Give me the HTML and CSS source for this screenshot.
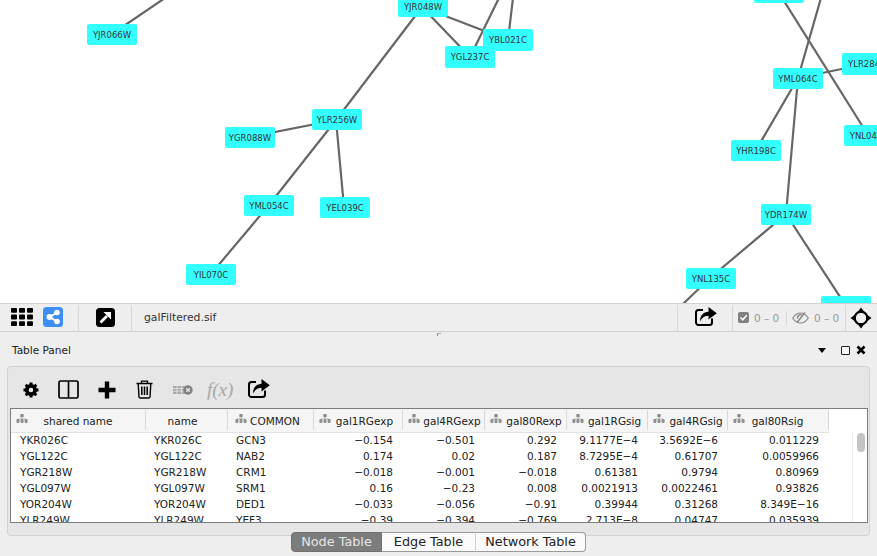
FILE: index.html
```html
<!DOCTYPE html>
<html lang="en">
<head>
<meta charset="utf-8">
<title>Table Panel</title>
<link rel="stylesheet" href="styles.css">
</head>
<body>
<svg width="0" height="0" class="defs">
  <defs>
    <symbol id="tree" viewBox="0 0 12 9">
      <rect x="4.300" y="0" width="3.400" height="3.200" rx="1" fill="#8a8a8a"/>
      <path d="M6 3V5M2 5H10" stroke="#b5b5b5" stroke-width="1" fill="none"/>
      <rect x="0.400" y="5" width="3" height="4" rx="1" fill="#8f8f8f"/>
      <rect x="4.500" y="5" width="3" height="4" rx="1" fill="#8f8f8f"/>
      <rect x="8.600" y="5" width="3" height="4" rx="1" fill="#8f8f8f"/>
    </symbol>
    <symbol id="export" viewBox="0 0 22 20">
      <path d="M8 4H3.500A2.500 2.500 0 0 0 1 6.500V16.500A2.500 2.500 0 0 0 3.500 19H14.500A2.500 2.500 0 0 0 17 16.500V12.500" fill="none" stroke="#000" stroke-width="2"/>
      <path d="M5 15.500C5 9.500 8.500 6 13.500 5.800V1L21.800 7.300L13.500 13.500V9.800C10 9.800 7 11.500 5 15.500Z" fill="#000"/>
    </symbol>
  </defs>
</svg>

<main class="app">
  <section class="canvas">
    <svg class="edges" width="877" height="303" viewBox="0 0 877 303">
      <g stroke="#666" stroke-width="2.200" fill="none" stroke-linecap="round">
        <path d="M112 34L165 -2"/>
        <path d="M422 7L336 120"/>
        <path d="M422 7L470 57"/>
        <path d="M422 7L508 40"/>
        <path d="M499 -2L470 57"/>
        <path d="M513 -2L508 40"/>
        <path d="M336 120L250 137"/>
        <path d="M336 120L269 205"/>
        <path d="M336 120L344 207"/>
        <path d="M269 205L211 274"/>
        <path d="M779 -7L868 135"/>
        <path d="M821 -2L798 78"/>
        <path d="M798 78L866 64"/>
        <path d="M798 78L756 150"/>
        <path d="M798 78L786 214"/>
        <path d="M786 214L710 278"/>
        <path d="M786 214L846 306"/>
        <path d="M710 278L684 303"/>
      </g>
    </svg>
    <span class="node n1">YJR066W</span>
    <span class="node n2">YJR048W</span>
    <span class="node n3">YBL021C</span>
    <span class="node n4">YGL237C</span>
    <span class="node n5">YLR256W</span>
    <span class="node n6">YGR088W</span>
    <span class="node n7">YML054C</span>
    <span class="node n8">YEL039C</span>
    <span class="node n9">YIL070C</span>
    <span class="node n10"></span>
    <span class="node n11">YML064C</span>
    <span class="node n12">YLR284C</span>
    <span class="node n13">YNL047C</span>
    <span class="node n14">YHR198C</span>
    <span class="node n15">YDR174W</span>
    <span class="node n16">YNL135C</span>
    <span class="node n17"></span>
  </section>

  <section class="statusbar">
    <svg class="ic-grid" width="22" height="18" viewBox="0 0 22 18">
      <g fill="#000">
        <rect x="0" y="0" width="6" height="4.800" rx="1"/><rect x="8" y="0" width="6" height="4.800" rx="1"/><rect x="16" y="0" width="6" height="4.800" rx="1"/>
        <rect x="0" y="6.600" width="6" height="4.800" rx="1"/><rect x="8" y="6.600" width="6" height="4.800" rx="1"/><rect x="16" y="6.600" width="6" height="4.800" rx="1"/>
        <rect x="0" y="13.200" width="6" height="4.800" rx="1"/><rect x="8" y="13.200" width="6" height="4.800" rx="1"/><rect x="16" y="13.200" width="6" height="4.800" rx="1"/>
      </g>
    </svg>
    <svg class="ic-share" width="20" height="20" viewBox="0 0 20 20">
      <rect width="20" height="20" rx="3.500" fill="#3e8ff5"/>
      <path d="M14 5.500L6.500 10L14 14.500" stroke="#fff" stroke-width="1.800" fill="none"/>
      <circle cx="14" cy="5.500" r="2.800" fill="#fff"/><circle cx="6.500" cy="10" r="3" fill="#fff"/><circle cx="14" cy="14.500" r="2.800" fill="#fff"/>
    </svg>
    <i class="sep sep-a"></i>
    <svg class="ic-open" width="19" height="19" viewBox="0 0 19 19">
      <rect width="19" height="19" rx="3.500" fill="#000"/>
      <path d="M4.500 14.500L11 8" stroke="#fff" stroke-width="2.800" fill="none"/>
      <path d="M7.500 4H15V11.500Z" fill="#fff"/>
    </svg>
    <i class="sep sep-b"></i>
    <span class="netname">galFiltered.sif</span>
    <i class="sep sep-c"></i>
    <svg class="ic-export-net" width="22" height="20"><use href="#export"/></svg>
    <i class="sep sep-d"></i>
    <svg class="ic-check" width="11" height="11" viewBox="0 0 11 11">
      <rect width="11" height="11" rx="2" fill="#808080"/>
      <path d="M2.500 5.500L4.800 7.800L8.700 3.200" stroke="#fff" stroke-width="1.600" fill="none"/>
    </svg>
    <span class="count count-a">0 – 0</span>
    <i class="sep sep-e"></i>
    <svg class="ic-eye" width="17" height="12" viewBox="0 0 17 12">
      <path d="M0.700 6C3 2.500 5.500 1 8.500 1S14 2.500 16.300 6C14 9.500 11.500 11 8.500 11S3 9.500 0.700 6Z" fill="none" stroke="#8a8a8a" stroke-width="1.200"/>
      <path d="M5 10.500L13 0.500M5.500 6.500A3 3 0 0 1 9.500 3" stroke="#8a8a8a" stroke-width="1.600" fill="none"/>
    </svg>
    <span class="count count-b">0 – 0</span>
    <i class="sep sep-f"></i>
    <svg class="ic-target" width="22" height="22" viewBox="0 0 22 22">
      <circle cx="11" cy="11" r="6.300" fill="none" stroke="#000" stroke-width="2.200"/>
      <path d="M11 0.500L14 4.500V6H8V4.500ZM11 21.500L8 17.500V16H14V17.500ZM0.500 11L4.500 8H6V14H4.500ZM21.500 11L17.500 14H16V8H17.500Z" fill="#000"/>
    </svg>
  </section>

  <div class="splitter"><i class="grip"></i></div>

  <header class="panelhead">
    <span class="paneltitle">Table Panel</span>
    <i class="tri"></i>
    <i class="winbox"></i>
    <svg class="winclose" width="10" height="10" viewBox="0 0 10 10"><path d="M1.500 1.500L8.500 8.500M8.500 1.500L1.500 8.500" stroke="#000" stroke-width="2.600"/></svg>
  </header>

  <section class="box">
    <div class="tools">
      <svg class="t-gear" width="16" height="16" viewBox="0 0 16 16">
        <circle cx="8" cy="8" r="4.200" fill="none" stroke="#000" stroke-width="3.600"/>
        <path d="M8 0.500V15.500M0.500 8H15.500M2.700 2.700L13.300 13.300M13.300 2.700L2.700 13.300" stroke="#000" stroke-width="3"/>
        <circle cx="8" cy="8" r="2.300" fill="#e6e6e6"/>
      </svg>
      <svg class="t-cols" width="21" height="19" viewBox="0 0 21 19">
        <rect x="1" y="1" width="19" height="17" rx="1.500" fill="none" stroke="#000" stroke-width="1.700"/>
        <path d="M10.500 1V18" stroke="#000" stroke-width="1.700"/>
      </svg>
      <svg class="t-plus" width="18" height="18" viewBox="0 0 18 18"><path d="M9 0.500V17.500M0.500 9H17.500" stroke="#000" stroke-width="4.400"/></svg>
      <svg class="t-trash" width="17" height="19" viewBox="0 0 17 19">
        <path d="M0.500 3.500H16.500M5.500 3.500V1.200H11.500V3.500" stroke="#000" stroke-width="1.300" fill="none"/>
        <path d="M2.200 3.500L3 17A1.500 1.500 0 0 0 4.500 18H12.500A1.500 1.500 0 0 0 14 17L14.800 3.500" stroke="#000" stroke-width="1.400" fill="none"/>
        <path d="M5.800 6.500V15M8.500 6.500V15M11.200 6.500V15" stroke="#000" stroke-width="1.500"/>
      </svg>
      <svg class="t-tablex" width="20" height="10" viewBox="0 0 20 10">
        <path d="M0 1H14V9H0Z" fill="#a8a8a8"/>
        <path d="M0 3.500H14M0 6.200H14M4 1V9M8.500 1V9" stroke="#e6e6e6" stroke-width="0.800"/>
        <circle cx="15" cy="5" r="4.700" fill="#808080"/>
        <path d="M13.200 3.200L16.800 6.800M16.800 3.200L13.200 6.800" stroke="#e6e6e6" stroke-width="1.300"/>
      </svg>
      <span class="t-fx">f(x)</span>
      <svg class="t-export" width="22" height="20"><use href="#export"/></svg>
    </div>

    <div class="tablewrap">
      <table class="grid">
        <colgroup>
          <col class="c1"><col class="c2"><col class="c3"><col class="c4"><col class="c5"><col class="c6"><col class="c7"><col class="c8"><col class="c9"><col class="c10">
        </colgroup>
        <thead>
          <tr>
            <th><div class="hc"><svg class="tree"><use href="#tree"/></svg><span class="lb lb-shared">shared name</span></div></th>
            <th><div class="hc"><span class="lb lb-name">name</span></div></th>
            <th><div class="hc hc-common"><svg class="tree"><use href="#tree"/></svg><span class="lb lb-common">COMMON</span></div></th>
            <th><div class="hc"><svg class="tree"><use href="#tree"/></svg><span class="lb lb-g1e">gal1RGexp</span></div></th>
            <th><div class="hc"><svg class="tree"><use href="#tree"/></svg><span class="lb">gal4RGexp</span></div></th>
            <th><div class="hc"><svg class="tree"><use href="#tree"/></svg><span class="lb">gal80Rexp</span></div></th>
            <th><div class="hc"><svg class="tree"><use href="#tree"/></svg><span class="lb lb-g1s">gal1RGsig</span></div></th>
            <th><div class="hc"><svg class="tree"><use href="#tree"/></svg><span class="lb">gal4RGsig</span></div></th>
            <th><div class="hc"><svg class="tree"><use href="#tree"/></svg><span class="lb lb-last">gal80Rsig</span></div></th>
            <th class="blank"></th>
          </tr>
        </thead>
        <tbody>
          <tr><td>YKR026C</td><td>YKR026C</td><td>GCN3</td><td class="n">−0.154</td><td class="n">−0.501</td><td class="n">0.292</td><td class="n">9.1177E−4</td><td class="n">3.5692E−6</td><td class="n">0.011229</td><td></td></tr>
          <tr><td>YGL122C</td><td>YGL122C</td><td>NAB2</td><td class="n">0.174</td><td class="n">0.02</td><td class="n">0.187</td><td class="n">8.7295E−4</td><td class="n">0.61707</td><td class="n">0.0059966</td><td></td></tr>
          <tr><td>YGR218W</td><td>YGR218W</td><td>CRM1</td><td class="n">−0.018</td><td class="n">−0.001</td><td class="n">−0.018</td><td class="n">0.61381</td><td class="n">0.9794</td><td class="n">0.80969</td><td></td></tr>
          <tr><td>YGL097W</td><td>YGL097W</td><td>SRM1</td><td class="n">0.16</td><td class="n">−0.23</td><td class="n">0.008</td><td class="n">0.0021913</td><td class="n">0.0022461</td><td class="n">0.93826</td><td></td></tr>
          <tr><td>YOR204W</td><td>YOR204W</td><td>DED1</td><td class="n">−0.033</td><td class="n">−0.056</td><td class="n">−0.91</td><td class="n">0.39944</td><td class="n">0.31268</td><td class="n">8.349E−16</td><td></td></tr>
          <tr><td>YLR249W</td><td>YLR249W</td><td>YEF3</td><td class="n">−0.39</td><td class="n">−0.394</td><td class="n">−0.769</td><td class="n">2.713E−8</td><td class="n">0.04747</td><td class="n">0.035939</td><td></td></tr>
        </tbody>
      </table>
      <div class="scroll"><i class="thumb"></i></div>
    </div>
  </section>

  <nav class="tabs">
    <span class="tab tab-on">Node Table</span>
    <span class="tab tab-edge">Edge Table</span>
    <span class="tab tab-net">Network Table</span>
  </nav>
</main>
</body>
</html>
```

FILE: styles.css
```css
* { box-sizing: border-box; }
html, body { margin: 0; padding: 0; }
body {
  width: 877px;
  height: 556px;
  overflow: hidden;
  background: #eeeeee;
  font-family: "DejaVu Sans", sans-serif;
  font-size: 11px;
  color: #222;
}
.defs { position: absolute; }
.app { display: flex; flex-direction: column; height: 556px; }

/* network canvas */
.canvas { position: relative; height: 303px; background: #fff; overflow: hidden; flex: none; }
.edges { position: absolute; left: 0; top: 0; }
.node {
  position: absolute;
  width: 50px;
  height: 21px;
  background: #33ffff;
  border-radius: 2px;
  font-size: 8.500px;
  line-height: 22px;
  text-align: center;
  color: #333;
  white-space: nowrap;
}
.n1 { left: 87px; top: 24px; }
.n2 { left: 398px; top: -4px; }
.n3 { left: 483px; top: 29px; height: 22px; line-height: 23px; }
.n4 { left: 445px; top: 46px; height: 22px; line-height: 23px; }
.n5 { left: 312px; top: 109px; }
.n6 { left: 225px; top: 127px; }
.n7 { left: 244px; top: 195px; }
.n8 { left: 320px; top: 197px; }
.n9 { left: 186px; top: 264px; }
.n10 { left: 754px; top: -18px; }
.n11 { left: 773px; top: 68px; }
.n12 { left: 842px; top: 53px; height: 22px; }
.n13 { left: 844px; top: 125px; }
.n14 { left: 731px; top: 140px; }
.n15 { left: 761px; top: 204px; }
.n16 { left: 686px; top: 268px; }
.n17 { left: 821px; top: 296px; }

/* network status bar */
.statusbar {
  height: 29px;
  flex: none;
  display: flex;
  align-items: center;
  border-top: 1px solid #d0d0d0;
  border-bottom: 1px solid #d0d0d0;
  background: #eeeeee;
}
.sep { display: block; width: 1px; height: 26px; background: #d6d6d6; flex: none; }
.ic-grid { margin: -1px 0 0 11px; flex: none; }
.ic-share { margin: -1px 0 0 10px; flex: none; }
.sep-a { margin-left: 15px; }
.ic-open { margin: -1px 0 0 17px; flex: none; }
.sep-b { margin-left: 16px; }
.netname { margin: -1px 0 0 12px; font-size: 10.800px; color: #333; width: 533px; flex: none; }
.sep-c { margin-left: 0; }
.ic-export-net { margin: -4px 0 0 17px; flex: none; }
.sep-d { margin-left: 15px; }
.ic-check { margin-left: 5px; flex: none; }
.count { color: #999; font-size: 10.500px; white-space: nowrap; }
.count-a { margin-left: 5px; width: 25px; }
.sep-e { height: 14px; margin-left: 7px; }
.ic-eye { margin-left: 5px; flex: none; }
.count-b { margin-left: 5px; width: 26px; }
.sep-f { margin-left: 5px; }
.ic-target { margin-left: 4px; flex: none; }

/* splitter and panel heading */
.splitter { height: 6px; flex: none; display: flex; justify-content: center; }
.grip { display: block; width: 4px; height: 3px; margin: 1px 0 0 0; border-left: 1px solid #888; border-top: 1px solid #aaa; }
.panelhead { height: 28px; flex: none; display: flex; align-items: center; padding: 0 0 4px 12px; }
.paneltitle { font-size: 10.500px; color: #222; width: 806px; flex: none; }
.tri { display: block; width: 0; height: 0; border-left: 4.500px solid transparent; border-right: 4.500px solid transparent; border-top: 5px solid #000; }
.winbox { display: block; width: 9px; height: 9px; margin-left: 15px; border: 1px solid #222; border-radius: 1px; background: #f6f6f6; }
.winclose { margin-left: 6px; flex: none; }

/* table box */
.box {
  margin: 0 7px 0 7px;
  height: 170px;
  flex: none;
  background: #e6e6e6;
  border: 1px solid #d2d2d2;
  border-radius: 4px;
  padding: 0 1px 0 2px;
}
.tools { height: 41px; display: flex; align-items: center; padding-top: 4px; }
.t-gear { margin-left: 13px; flex: none; }
.t-cols { margin-left: 19px; flex: none; }
.t-plus { margin-left: 19px; flex: none; }
.t-trash { margin-left: 20px; flex: none; }
.t-tablex { margin-left: 20px; flex: none; }
.t-fx { margin-left: 14px; font-family: "Liberation Serif", serif; font-style: italic; font-size: 19px; color: #a8a8a8; }
.t-export { margin: -3px 0 0 15px; flex: none; }

.tablewrap {
  position: relative;
  height: 115px;
  background: #fff;
  border: 1px solid #7c7c7c;
  overflow: hidden;
}
.grid { border-collapse: collapse; table-layout: fixed; width: 819px; }
.c1 { width: 135px; } .c2 { width: 82px; } .c3 { width: 86px; } .c4 { width: 89px; } .c5 { width: 82px; }
.c6 { width: 82px; } .c7 { width: 81px; } .c8 { width: 80px; } .c9 { width: 101px; } .c10 { width: 1px; }
.grid th {
  height: 23px;
  padding: 0;
  background: #f5f5f5;
  border-bottom: 1px solid #e2e2e2;
  font-weight: normal;
  text-align: left;
}
.grid th.blank { background: #fff; border: 0; }
.hc { display: flex; align-items: center; height: 20px; border-right: 1px solid #d8d8d8; padding-left: 5px; }
.hc-common { padding-left: 7px; }
.tree { width: 12px; height: 9px; flex: none; margin-top: -3px; }
.lb { flex: 1; text-align: center; font-size: 10.500px; color: #222; white-space: nowrap; padding-top: 1px; }
.lb-shared { padding-right: 17px; }
.lb-name { padding-right: 13px; }
.lb-common { padding-right: 10px; }
.lb-g1e { padding-right: 4px; }
.lb-g1s { padding-right: 2px; }
.lb-last { padding-right: 18px; }
.grid td {
  height: 16px;
  padding: 0 9px 2px 8px;
  font-size: 10.500px;
  line-height: 14px;
  color: #222;
  white-space: nowrap;
  overflow: hidden;
}
.grid td:first-child { padding-left: 9px; }
.grid td.n { text-align: right; padding-right: 10px; }

.scroll { position: absolute; right: 0; top: 23px; bottom: 0; width: 15px; background: #fff; border-left: 1px solid #ececec; }
.thumb { display: block; width: 8px; height: 19px; margin: 1px 0 0 4px; background: #c4c4c4; border-radius: 4px; }

/* tabs */
.tabs { display: flex; margin: -4px 0 0 291px; height: 20px; flex: none; position: relative; }
.tab {
  display: block;
  height: 20px;
  line-height: 17px;
  text-align: center;
  font-size: 12.800px;
  color: #222;
  background: #fafafa;
  border: 1px solid #9a9a9a;
}
.tab-on { width: 91px; background: #7c7c7c; color: #e6e6e6; border-color: #6f6f6f; border-radius: 4px 0 0 4px; }
.tab-edge { width: 94px; border-left: 0; border-right: 1px solid #cfcfcf; }
.tab-net { width: 110px; border-left: 0; border-radius: 0 4px 4px 0; }
```
